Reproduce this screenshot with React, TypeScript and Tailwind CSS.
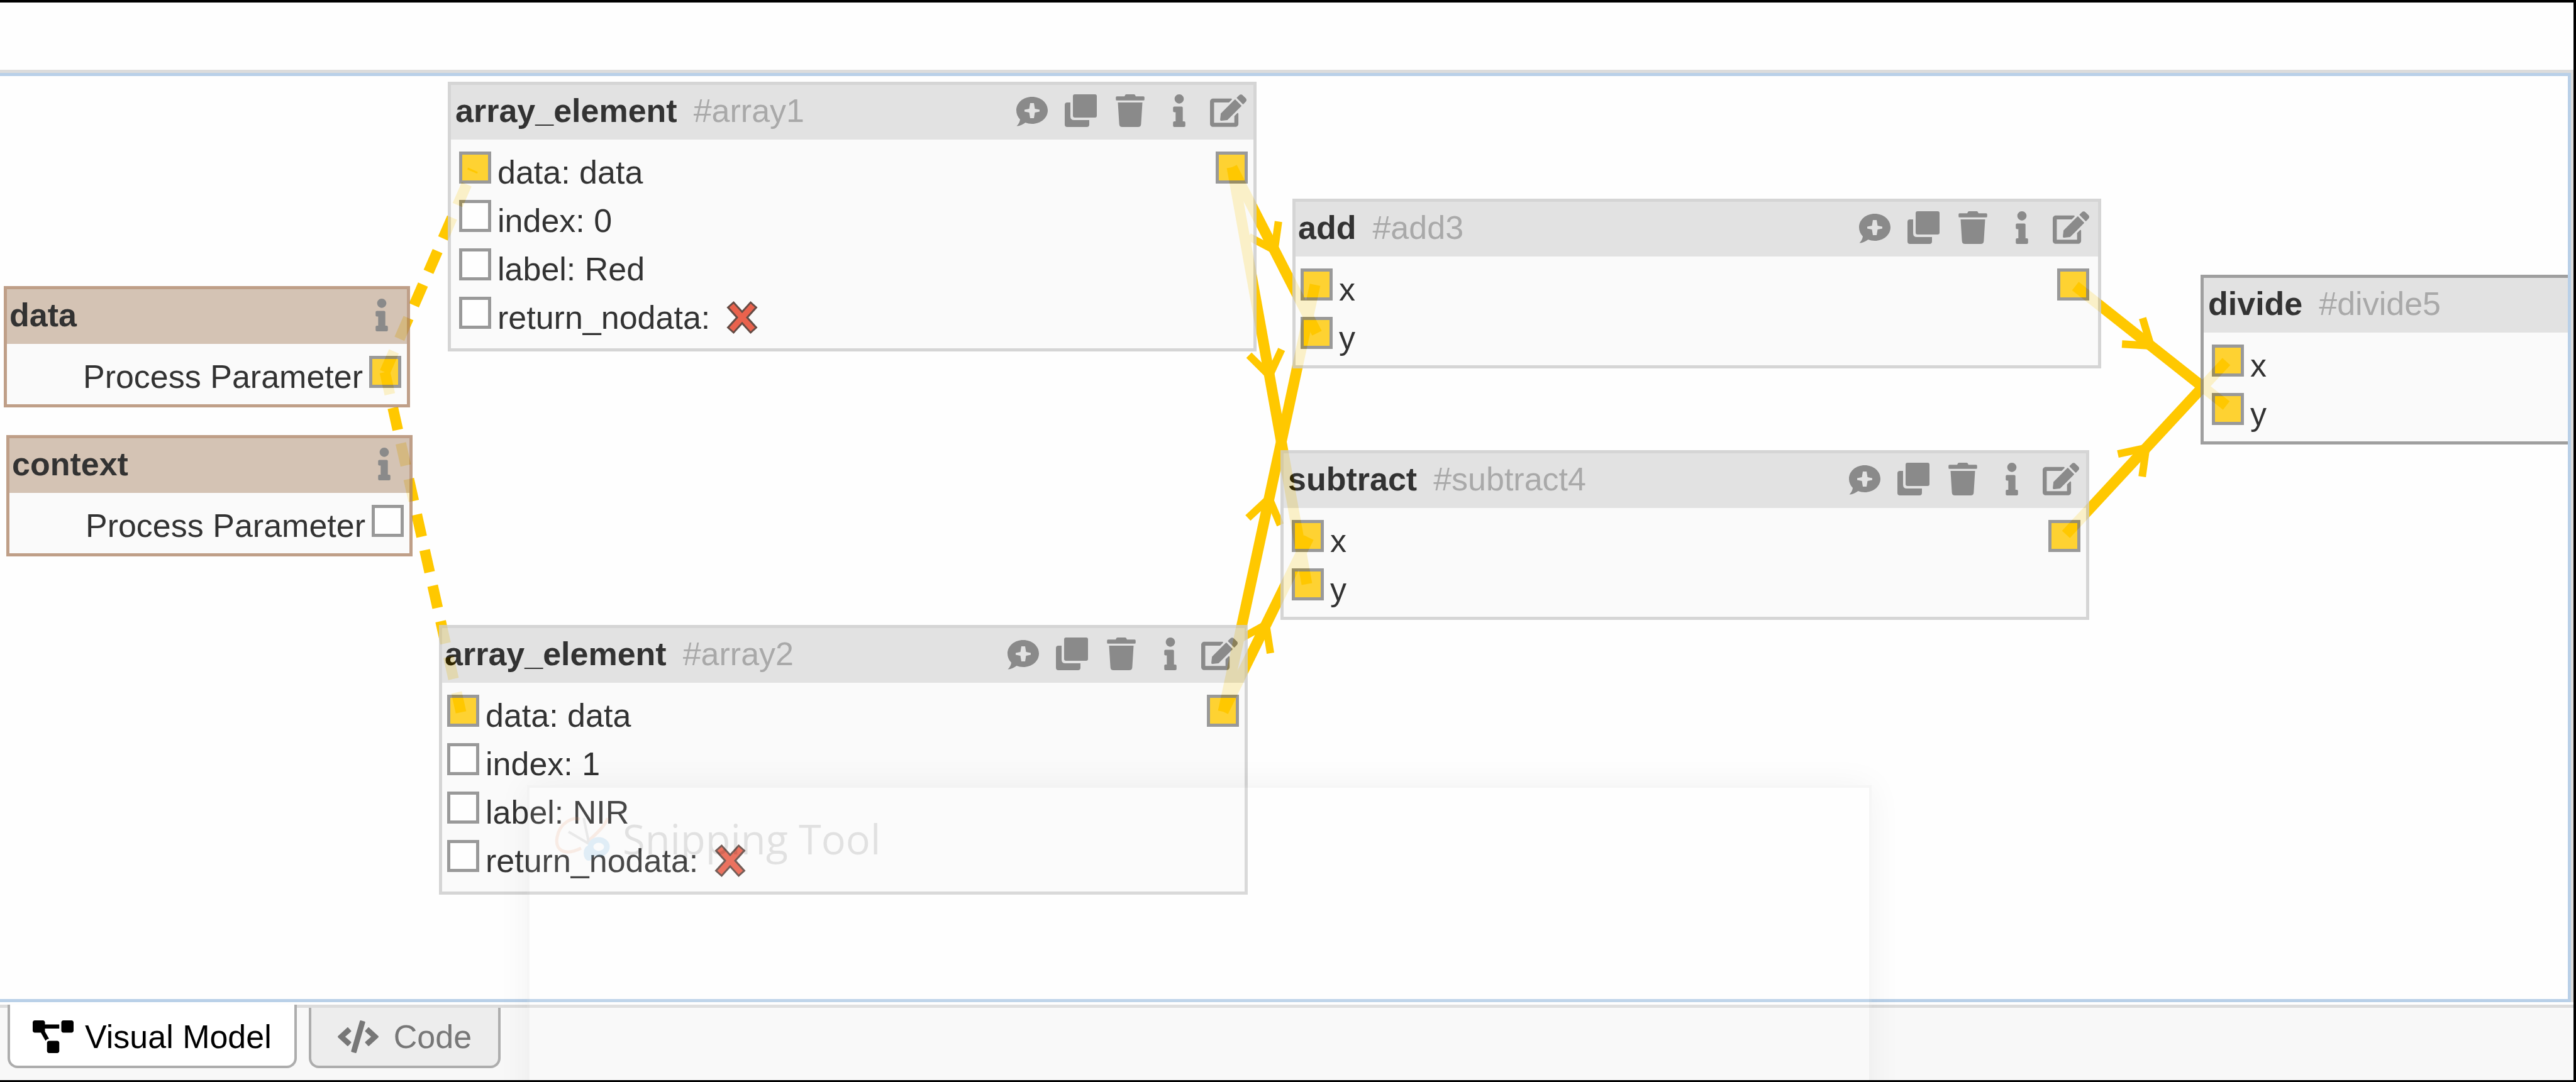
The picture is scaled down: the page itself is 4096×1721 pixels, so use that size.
import React from "react";
import { FaCode, FaEdit, FaInfo, FaProjectDiagram, FaTrash } from "react-icons/fa";

type Input = { label: string; connected?: boolean; flag?: boolean };

type ProcessNode = {
  title: string;
  id: string;
  place: string;
  wide?: boolean;
  wideEnd?: boolean;
  selected?: boolean;
  inputs: Input[];
};

const arrayInputs = (index: number, label: string): Input[] => [
  { label: "data: data", connected: true },
  { label: `index: ${index}` },
  { label: `label: ${label}` },
  { label: "return_nodata:", flag: true },
];

const binaryInputs: Input[] = [
  { label: "x", connected: true },
  { label: "y", connected: true },
];

const nodes: ProcessNode[] = [
  { title: "array_element", id: "#array1", place: "left-[712px] top-[9px]", wide: true, inputs: arrayInputs(0, "Red") },
  { title: "array_element", id: "#array2", place: "left-[698px] top-[873px]", inputs: arrayInputs(1, "NIR") },
  { title: "add", id: "#add3", place: "left-[2055px] top-[195px]", wideEnd: true, inputs: binaryInputs },
  { title: "subtract", id: "#subtract4", place: "left-[2036px] top-[595px]", wide: true, inputs: binaryInputs },
  { title: "divide", id: "#divide5", place: "left-[3499px] top-[316px]", wide: true, selected: true, inputs: binaryInputs },
];

const parameters = [
  { title: "data", place: "left-[6px] top-[334px]", connected: true },
  { title: "context", place: "left-[10px] top-[571px]", connected: false },
];

function CommentIcon() {
  return (
    <svg viewBox="0 0 52 52" className="h-[52px] w-[52px]" fill="currentColor" aria-hidden="true">
      <path
        fillRule="evenodd"
        d="M26 4C40 4 51 13.500 51 25.500S40 47 26 47C22 47 18.500 46.300 15.500 45C11 48.500 6 50.500 1.500 50.500C4.500 47.500 6.500 44 7 40C3 36 1 31 1 25.500C1 13.500 12 4 26 4ZM23 14L21.500 23L14 24.500V27.500L21.500 29L23 38H29L30.500 29L38 27.500V24.500L30.500 23L29 14Z"
      />
    </svg>
  );
}

function CopyIcon() {
  return (
    <svg viewBox="0 0 52 52" className="h-[52px] w-[52px]" fill="currentColor" aria-hidden="true">
      <rect x="13" y="0" width="38" height="37" rx="3" />
      <path d="M4 13H9V35Q9 41 15 41H39V48Q39 52 35 52H4Q0 52 0 48V17Q0 13 4 13Z" />
    </svg>
  );
}

const actions = [
  { name: "Add comment", icon: <CommentIcon /> },
  { name: "Duplicate", icon: <CopyIcon /> },
  { name: "Delete", icon: <FaTrash className="h-[52px] w-[46px]" /> },
  { name: "Details", icon: <FaInfo className="h-[52px] w-5" /> },
  { name: "Edit", icon: <FaEdit className="h-[52px] w-[58px]" /> },
];

type Line = [number, number, number, number];

const edges: Line[] = [
  [1959, 145, 2094, 409],
  [1945, 1011, 2091, 332],
  [1959, 145, 2078, 808],
  [1945, 1011, 2081, 734],
  [3300, 334, 3540, 524],
  [3285, 729, 3540, 454],
];

const parameterEdges: Line[] = [
  [612, 471, 752, 149],
  [612, 471, 733, 1012],
];

function arrowHead([x1, y1, x2, y2]: Line) {
  const tipX = (x1 + x2) / 2;
  const tipY = (y1 + y2) / 2;
  const back = Math.atan2(y1 - y2, x1 - x2);
  const arm = (turn: number) =>
    `${tipX + 46 * Math.cos(back + turn)},${tipY + 46 * Math.sin(back + turn)}`;
  return `${arm(0.61)} ${tipX},${tipY} ${arm(-0.61)}`;
}

function Edges() {
  return (
    <svg className="absolute inset-0 h-full w-full" fill="none" stroke="#ffc800" aria-hidden="true">
      {parameterEdges.map((e) => (
        <line key={e.join()} x1={e[0]} y1={e[1]} x2={e[2]} y2={e[3]} strokeWidth={17} strokeDasharray="36 22" />
      ))}
      {edges.map((e) => (
        <g key={e.join()}>
          <line x1={e[0]} y1={e[1]} x2={e[2]} y2={e[3]} strokeWidth={17} />
          <polyline points={arrowHead(e)} strokeWidth={12} />
        </g>
      ))}
    </svg>
  );
}

function Port({ connected, name }: { connected?: boolean; name: string }) {
  return (
    <button
      type="button"
      aria-label={name}
      className={`block size-[51px] shrink-0 border-[5px] border-[#808080] ${connected ? "bg-[#ffc800]" : "bg-white"}`}
    />
  );
}

function ActionButton({ name, icon }: { name: string; icon: React.ReactNode }) {
  return (
    <button type="button" aria-label={name} className="flex w-[65px] justify-center text-[#6e6e6e]">
      {icon}
    </button>
  );
}

function Cross() {
  return (
    <svg viewBox="0 0 54 56" className="ml-6 h-14 w-[54px]" role="img" aria-label="false">
      <path d="M8 7 46 49M46 7 8 49" stroke="#3f2018" strokeWidth="15" fill="none" />
      <path d="M10 9 44 47M44 9 10 47" stroke="#e43c22" strokeWidth="9" fill="none" />
    </svg>
  );
}

function ProcessBox({ node }: { node: ProcessNode }) {
  return (
    <section
      className={`absolute ${node.place} w-[1286px] border-[5px] bg-[#fafafa] opacity-80 ${
        node.selected ? "border-[#888888]" : "border-[#cccccc]"
      }`}
    >
      <header
        className={`flex h-[87px] items-center bg-[#dcdcdc] pb-[5px] ${node.wide ? "pl-[7px]" : "pl-[4px]"} ${
          node.wideEnd ? "pr-[11px]" : "pr-2"
        }`}
      >
        <h2 className="font-bold">{node.title}</h2>
        <span className="ml-[26px] text-[#959595]">{node.id}</span>
        {!node.selected && (
          <div className="ml-auto flex gap-[13px]">
            {actions.map((a) => (
              <ActionButton key={a.name} {...a} />
            ))}
          </div>
        )}
      </header>
      <div
        className={`flex justify-between pt-[19px] ${node.wide ? "pl-[13px]" : "pl-[8px]"} ${
          node.wideEnd ? "pr-[14px]" : "pr-[9px]"
        }`}
      >
        <ul>
          {node.inputs.map((input) => (
            <li key={input.label} className={`flex items-start gap-[10px] ${input.flag ? "h-[82px]" : "h-[77px]"}`}>
              <Port connected={input.connected} name={input.label} />
              <span className="flex items-center leading-[66px]">
                {input.label}
                {input.flag && <Cross />}
              </span>
            </li>
          ))}
        </ul>
        {!node.selected && <Port connected name={`${node.title} output`} />}
      </div>
    </section>
  );
}

function ParameterBox({ title, place, connected }: { title: string; place: string; connected: boolean }) {
  return (
    <section className={`absolute ${place} w-[646px] border-[5px] border-[#b0886b] bg-[#fafafa] opacity-80`}>
      <header className="flex h-[87px] items-center justify-between bg-[#cab5a2] pr-2 pb-[5px] pl-[4px]">
        <h2 className="font-bold">{title}</h2>
        <ActionButton name="Details" icon={<FaInfo className="h-[52px] w-5" />} />
      </header>
      <div className="flex h-[96px] items-start justify-end gap-[10px] pt-[19px] pr-[9px]">
        <span className="leading-[66px]">Process Parameter</span>
        <Port connected={connected} name={`${title} output`} />
      </div>
    </section>
  );
}

function SnippingGhost() {
  return (
    <div className="pointer-events-none absolute top-[1245px] -bottom-16 left-[838px] w-[2138px] border-4 border-black/[0.03] bg-white/10 shadow-[0_0_50px_rgba(0,0,0,0.05)]">
      <div className="flex items-center gap-5 pt-10 pl-10">
        <svg viewBox="0 0 88 74" className="h-[74px] w-[88px] opacity-15" fill="none" aria-hidden="true">
          <path d="M42 52C14 66 0 54 4 34 8 12 28 2 40 6M52 42C70 26 82 14 84 4" stroke="#e8956a" strokeWidth="5" />
          <path d="M22 26 56 46M46 4 54 42" stroke="#8a8a8a" strokeWidth="4" />
          <ellipse cx="70" cy="50" rx="13" ry="11" stroke="#4da3e0" strokeWidth="9" />
          <ellipse cx="54" cy="60" rx="8" ry="12" fill="#4da3e0" />
        </svg>
        <span className="font-['Open_Sans',sans-serif] text-[65px] leading-[82px] text-black/10">Snipping Tool</span>
      </div>
    </div>
  );
}

export default function App() {
  return (
    <div className="relative flex h-screen flex-col overflow-hidden border-t-4 border-r-4 border-b-[3px] border-black bg-[#fefefe] font-['Liberation_Sans',Arial,sans-serif] text-[52px] leading-[60px] text-black">
      <div className="h-[107px] shrink-0" />
      <div className="flex min-h-0 flex-1 border-t-[5px] border-r-4 border-[#dcdcdc]">
        <main className="relative flex-1 overflow-hidden border-t-[5px] border-r-[5px] border-b-[5px] border-[#b9d0e8]">
          <Edges />
          {parameters.map((p) => (
            <ParameterBox key={p.title} {...p} />
          ))}
          {nodes.map((n) => (
            <ProcessBox key={n.id} node={n} />
          ))}
        </main>
      </div>
      <div
        role="tablist"
        className="mt-1 flex shrink-0 items-start gap-[19px] border-t-[5px] border-[#dcdcdc] bg-[#f8f8f8] pb-[19px] pl-3"
      >
        <button
          type="button"
          role="tab"
          aria-selected="true"
          className="-mt-[5px] flex items-center gap-[18px] rounded-b-2xl border-4 border-t-0 border-[#adadad] bg-white px-9 pt-[21px] pb-4"
        >
          <FaProjectDiagram className="h-[52px] w-[65px]" />
          Visual Model
        </button>
        <button
          type="button"
          role="tab"
          aria-selected="false"
          className="flex items-center gap-6 rounded-b-2xl border-4 border-t-0 border-[#adadad] bg-[#ededed] px-[42px] py-4 text-[#777777]"
        >
          <FaCode className="h-[52px] w-[65px]" />
          Code
        </button>
      </div>
      <SnippingGhost />
    </div>
  );
}
